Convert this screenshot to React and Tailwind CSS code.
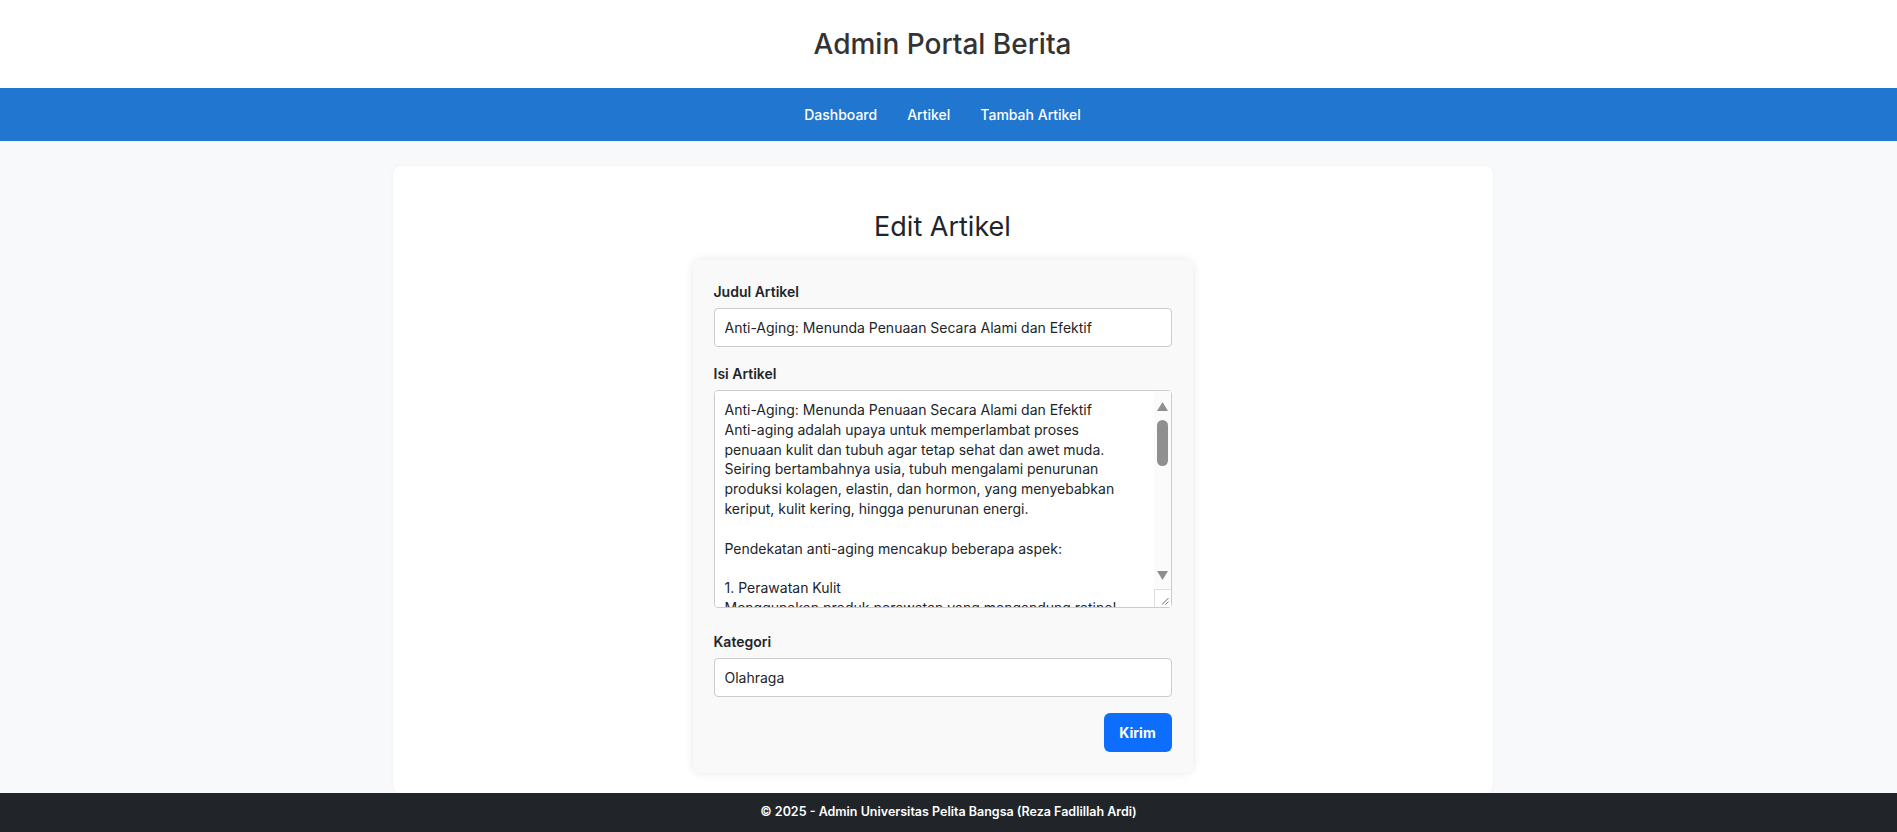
import React, { useState } from 'react';

const initialContent = `Anti-Aging: Menunda Penuaan Secara Alami dan Efektif
Anti-aging adalah upaya untuk memperlambat proses
penuaan kulit dan tubuh agar tetap sehat dan awet muda.
Seiring bertambahnya usia, tubuh mengalami penurunan
produksi kolagen, elastin, dan hormon, yang menyebabkan
keriput, kulit kering, hingga penurunan energi.

Pendekatan anti-aging mencakup beberapa aspek:

1. Perawatan Kulit
Menggunakan produk perawatan yang mengandung retinol,
vitamin C, asam hialuronat, dan tabir surya untuk
melindungi kulit dari kerusakan akibat sinar UV.

2. Pola Makan Sehat
Mengonsumsi makanan kaya antioksidan seperti buah,
sayuran, kacang-kacangan, dan ikan berlemak membantu
melawan radikal bebas penyebab penuaan dini.

3. Olahraga Teratur
Aktivitas fisik meningkatkan sirkulasi darah, menjaga
kekuatan otot, dan membantu menjaga elastisitas kulit.

4. Tidur yang Cukup
Tidur 7-8 jam setiap malam memberi kesempatan tubuh
untuk memperbaiki sel-sel yang rusak.

5. Mengelola Stres
Stres berkepanjangan dapat mempercepat penuaan.
Meditasi, yoga, dan hobi positif dapat membantu.

Kesimpulan
Anti-aging bukan sekadar tampil muda, tetapi menjaga
kesehatan tubuh secara menyeluruh agar tetap bugar
dan produktif di usia berapa pun.`;

const font = { fontFamily: 'Inter, "Open Sans", sans-serif' };

// Classic scrollbar drawn over the textarea's right edge (native one is hidden)
function FakeScrollbar() {
  return (
    <div className="absolute top-[1px] right-[1px] bottom-[1px] w-[17px] bg-[#fbfbfb] pointer-events-none">
      <svg className="absolute left-[3px] top-[11px]" width="11" height="9" viewBox="0 0 11 9">
        <polygon points="5.5,0 11,9 0,9" fill="#8f8f8f" />
      </svg>
      <div className="absolute left-[3px] top-[29px] w-[11px] h-[46px] rounded-full bg-[#8f8f8f]" />
      <svg className="absolute left-[3px] top-[180px]" width="11" height="9" viewBox="0 0 11 9">
        <polygon points="0,0 11,0 5.5,9" fill="#8f8f8f" />
      </svg>
      <div className="absolute left-0 right-0 bottom-0 h-[18px] bg-white border-t border-l border-[#dddddd]">
        <svg className="absolute right-[2px] bottom-[2px]" width="9" height="9" viewBox="0 0 9 9">
          <path d="M8.5 2 L2 8.5 M8.5 5.5 L5.5 8.5" stroke="#6b6b6b" strokeWidth="1" fill="none" />
        </svg>
      </div>
    </div>
  );
}

export default function App() {
  const [judul, setJudul] = useState('Anti-Aging: Menunda Penuaan Secara Alami dan Efektif');
  const [isi, setIsi] = useState(initialContent);
  const [kategori, setKategori] = useState('Olahraga');

  return (
    <div className="min-h-screen flex flex-col bg-[#f8f9fa] font-['Inter','Open_Sans',sans-serif]">
      {/* Header */}
      <header className="h-[88px] bg-white flex items-center justify-center pr-[12px]">
        <h1 className="text-[28px] font-medium text-[#333333] leading-none">Admin Portal Berita</h1>
      </header>

      {/* Nav */}
      <nav className="h-[53px] bg-[#2176cf] flex items-center justify-center gap-[30px] pr-[12px]">
        {['Dashboard', 'Artikel', 'Tambah Artikel'].map(item => (
          <a key={item} href="#" className="text-[14px] font-medium text-white leading-none">
            {item}
          </a>
        ))}
      </nav>

      {/* Main */}
      <main className="flex-1 pt-[25px] pr-[12px]">
        <div className="w-[1100px] mx-auto bg-white rounded-lg shadow-[0_0_4px_rgba(0,0,0,0.04)] pt-[44px] pb-[20px]">
          <h2 className="text-center text-[27px] font-normal text-[#212529] leading-[34px] mb-[16px]">Edit Artikel</h2>

          <form
            className="w-[500px] mx-auto bg-[#f9f9f9] rounded-lg shadow-[0_0_10px_rgba(0,0,0,0.1)] px-[21px] pt-[20px] pb-[21px]"
            onSubmit={e => e.preventDefault()}
          >
            <label className="block text-[14px] font-semibold text-[#212529] leading-[23px] mb-[5px]">Judul Artikel</label>
            <input
              type="text"
              value={judul}
              onChange={e => setJudul(e.target.value)}
              className="block w-full h-[39px] bg-white border border-[#cccccc] rounded-[4px] px-[10px] text-[14px] text-[#212529] outline-none"
              style={font}
            />

            <label className="block mt-[15px] text-[14px] font-semibold text-[#212529] leading-[23px] mb-[5px]">Isi Artikel</label>
            <div className="relative">
              <textarea
                value={isi}
                onChange={e => setIsi(e.target.value)}
                className="block w-full h-[218px] bg-white border border-[#cccccc] rounded-[4px] pl-[10px] pr-[28px] py-[9px] text-[14px] leading-[19.8px] text-[#212529] outline-none resize-none overflow-y-scroll [scrollbar-width:none] [&::-webkit-scrollbar]:hidden"
                style={font}
              />
              <FakeScrollbar />
            </div>

            <label className="block mt-[22px] text-[14px] font-semibold text-[#212529] leading-[23px] mb-[5px]">Kategori</label>
            <input
              type="text"
              value={kategori}
              onChange={e => setKategori(e.target.value)}
              className="block w-full h-[39px] bg-white border border-[#cccccc] rounded-[4px] px-[10px] text-[14px] text-[#212529] outline-none"
              style={font}
            />

            <div className="flex justify-end mt-[16px]">
              <button
                type="submit"
                className="w-[68px] h-[39px] bg-[#0d6efd] rounded-[6px] text-white text-[14px] font-bold"
              >
                Kirim
              </button>
            </div>
          </form>
        </div>
      </main>

      {/* Footer */}
      <footer className="h-[39px] bg-[#212529] flex items-center justify-center">
        <p className="text-[12.5px] font-semibold text-white">© 2025 - Admin Universitas Pelita Bangsa (Reza Fadlillah Ardi)</p>
      </footer>
    </div>
  );
}
